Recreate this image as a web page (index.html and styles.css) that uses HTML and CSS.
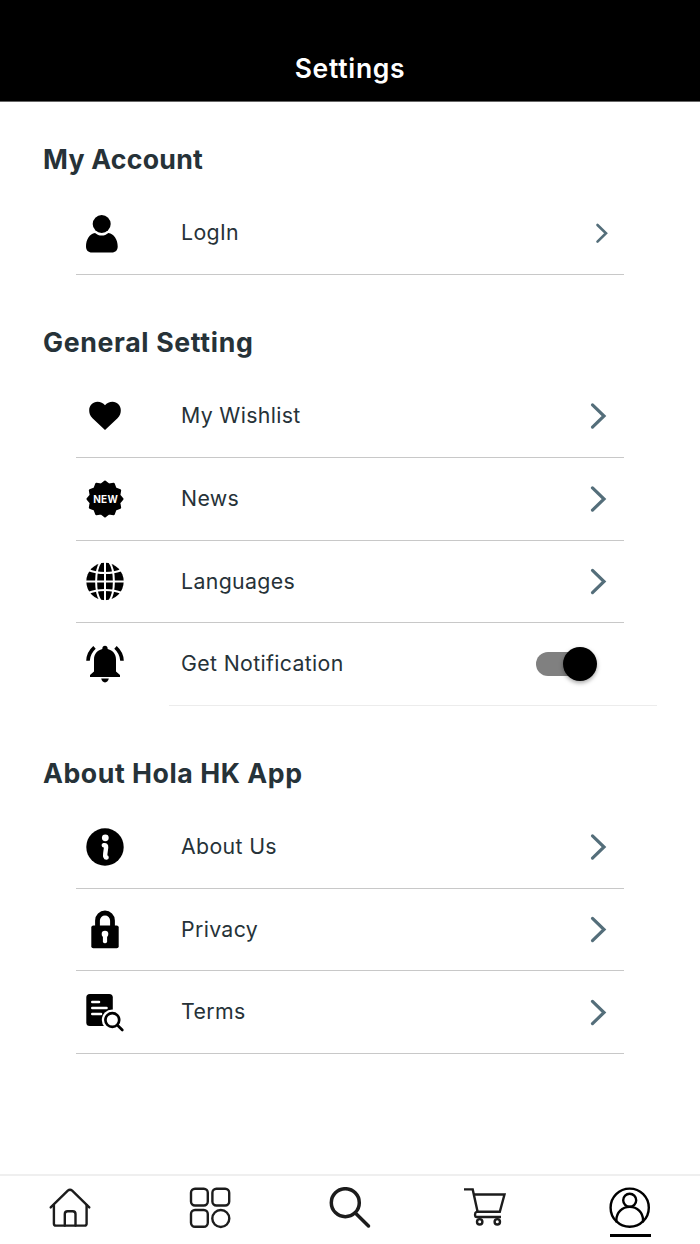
FILE: index.html
```html
<!DOCTYPE html>
<html lang="en">
<head>
    <meta charset="UTF-8">
    <meta name="viewport" content="width=device-width, initial-scale=1.0">
    <title>Settings</title>
    <link rel="stylesheet" href="styles.css">
</head>
<body>

    <header class="header">
        <h1>Settings</h1>
    </header>

    <main class="settings">
        <h2 class="first">My Account</h2>
        <div class="row">
            <svg class="icon" viewBox="0 0 40 40">
                <circle cx="16.7" cy="11" r="9"/>
                <path d="M10 19.9C12 21.500 14.200 22.500 16.700 22.500S21.400 21.500 23.400 19.900C29 20.500 32.700 26.500 32.700 33.500C32.700 37.300 30.500 39.500 26.700 39.500H7C3.200 39.500 1 37.300 1 33.500C1 26.500 4.500 20.500 10 19.900Z"/>
            </svg>
            <span class="label">LogIn</span>
            <svg class="arrow small" viewBox="0 0 20 30"><path d="M8.500 7L17 15.300L8.500 23.600"/></svg>
        </div>

        <h2>General Setting</h2>
        <div class="row">
            <svg class="icon" viewBox="0 0 40 40">
                <path d="M20 34L7.500 22.300C4.800 19.600 4.200 17 4.200 14.300C4.200 9.500 7.800 5.800 12.500 5.800C15.600 5.800 18.200 7 20 9.300C21.800 7 24.400 5.800 27.500 5.800C32.200 5.800 35.800 9.500 35.800 14.300C35.800 17 35.200 19.600 32.500 22.300Z"/>
            </svg>
            <span class="label">My Wishlist</span>
            <svg class="arrow" viewBox="0 0 20 30"><path d="M3.500 3.900L15 15L3.500 26.100"/></svg>
        </div>
        <div class="row">
            <svg class="icon" viewBox="0 0 40 40">
                <polygon class="badge" points="37.4,20 34.300,23.830 35.070,28.700 30.470,30.470 28.700,35.070 23.830,34.300 20,37.400 16.170,34.300 11.300,35.070 9.530,30.470 4.930,28.700 5.700,23.830 2.600,20 5.700,16.170 4.930,11.300 9.530,9.530 11.300,4.930 16.170,5.700 20,2.600 23.830,5.700 28.700,4.930 30.470,9.530 35.070,11.300 34.300,16.170"/>
                <text class="badge-text" x="8.200" y="23.800">NEW</text>
            </svg>
            <span class="label">News</span>
            <svg class="arrow" viewBox="0 0 20 30"><path d="M3.500 3.900L15 15L3.500 26.100"/></svg>
        </div>
        <div class="row">
            <svg class="icon" viewBox="0 0 40 40">
                <circle cx="20" cy="20.500" r="18.700"/>
                <g class="cut">
                    <path d="M20 0V40M0 20.500H40"/>
                    <path d="M16 0.500C9.500 9.500 9.500 31.500 16 40.500M24 0.500C30.500 9.500 30.500 31.500 24 40.500"/>
                    <path d="M3 9C13 13 27 13 37 9M3 32C13 28 27 28 37 32"/>
                </g>
            </svg>
            <span class="label">Languages</span>
            <svg class="arrow" viewBox="0 0 20 30"><path d="M3.500 4.400L15 15.500L3.500 26.600"/></svg>
        </div>
        <div class="row notify">
            <svg class="icon" viewBox="0 0 40 40">
                <path d="M20 1.800C21.600 1.800 22.700 3 22.700 5C28 6.500 31 10 31 15.500V27.500L35 31V32.900H5V31L9 27.500V15.500C9 10 12 6.500 17.300 5C17.300 3 18.400 1.800 20 1.800Z"/>
                <path d="M16.200 34.600H23.800C23.400 36.900 22 38.400 20 38.400S16.600 36.900 16.200 34.600Z"/>
                <path class="wave" d="M3 16.700C3.200 11.500 5.200 7.200 9.500 3.300M37 16.700C36.800 11.500 34.800 7.200 30.500 3.300"/>
            </svg>
            <span class="label">Get Notification</span>
            <div class="toggle"><div class="knob"></div></div>
        </div>

        <h2 class="about">About Hola HK App</h2>
        <div class="row">
            <svg class="icon" viewBox="0 0 40 40">
                <circle cx="20" cy="20" r="18.700"/>
                <circle class="white" cx="20.300" cy="10.800" r="3.400"/>
                <path class="stem" d="M18.800 18.200C20.600 17.800 21.300 18.500 21.100 20.500L20.300 26.500C20 29.200 20.300 30.600 21.600 30.500"/>
            </svg>
            <span class="label">About Us</span>
            <svg class="arrow" viewBox="0 0 20 30"><path d="M3.500 3.900L15 15L3.500 26.100"/></svg>
        </div>
        <div class="row">
            <svg class="icon" viewBox="0 0 40 40">
                <rect x="6.300" y="16.500" width="27.400" height="22.700" rx="2"/>
                <path class="shackle" d="M12.500 18.500V11.500A7.500 7.500 0 0 1 27.500 11.500V18.500"/>
                <circle class="white" cx="20" cy="25" r="3.300"/>
                <rect class="white" x="17.900" y="24.700" width="4.200" height="9.500" rx="1.800"/>
            </svg>
            <span class="label">Privacy</span>
            <svg class="arrow" viewBox="0 0 20 30"><path d="M3.500 4.400L15 15.500L3.500 26.600"/></svg>
        </div>
        <div class="row">
            <svg class="icon" viewBox="0 0 40 40">
                <rect x="1.300" y="2" width="26.500" height="32" rx="3.500"/>
                <path class="lines" d="M7.300 10H14M7.300 16H21.500M7.300 22H16"/>
                <circle class="white" cx="27.300" cy="28" r="10.500"/>
                <path class="lens" d="M33 33.700L37.300 38"/>
                <circle class="lens" cx="27.300" cy="28" r="6.900"/>
            </svg>
            <span class="label">Terms</span>
            <svg class="arrow" viewBox="0 0 20 30"><path d="M3.500 4.400L15 15.500L3.500 26.600"/></svg>
        </div>
    </main>

    <nav class="tabs">
        <a class="tab">
            <svg viewBox="0 0 42 42">
                <path d="M1.700 20.400L18.800 3.700Q21 1.700 23.200 3.700L40.300 20.400"/>
                <path d="M4.900 18V36.700Q4.900 38.600 6.900 38.600H35.600Q37.600 38.600 37.600 36.700V18"/>
                <path d="M15.800 38.500V27Q15.800 24.200 18.600 24.200H23.700Q26.500 24.200 26.500 27V38.500"/>
            </svg>
        </a>
        <a class="tab">
            <svg viewBox="0 0 42 42">
                <rect x="2" y="1.700" width="16.800" height="16.800" rx="4"/>
                <rect x="23.400" y="1.700" width="16.800" height="16.800" rx="4"/>
                <rect x="2" y="23" width="16.800" height="16.800" rx="4"/>
                <circle cx="31.800" cy="31.500" r="8.500"/>
            </svg>
        </a>
        <a class="tab search">
            <svg viewBox="0 0 42 42">
                <circle cx="16.300" cy="15.700" r="14"/>
                <path d="M26.600 26.300L39.500 39"/>
            </svg>
        </a>
        <a class="tab cart">
            <svg viewBox="0 0 52 42">
                <path d="M0 2.400H8.700L13.600 24.800"/>
                <path d="M10 7.500H40.500L35.800 24.800H12.500C10.500 25.500 10.500 30 12.800 30H37"/>
                <circle cx="15.700" cy="34.800" r="2.700"/>
                <circle cx="33.300" cy="34.800" r="2.700"/>
            </svg>
        </a>
        <a class="tab active">
            <svg viewBox="0 0 42 42">
                <circle cx="20.700" cy="20.700" r="19.100"/>
                <circle cx="20.700" cy="13.200" r="6.500"/>
                <path d="M7.400 34.400V33C7.400 25.500 13.200 19.900 20.700 19.900S34 25.500 34 33V34.400"/>
            </svg>
        </a>
    </nav>

</body>
</html>
```
FILE: styles.css
```css
body {
    margin: 0;
    height: 1244px;
    display: flex;
    flex-direction: column;
    background: #fff;
    color: #263238;
    font-family: Inter, "Liberation Sans", sans-serif;
    overflow: hidden;
}

.header {
    box-sizing: border-box;
    height: 102px;
    padding-top: 50px;
    background: #000;
    border-bottom: 1px solid #666;
}

.header h1 {
    margin: 0;
    color: #fff;
    font-size: 26.5px;
    font-weight: 600;
    line-height: 36px;
    letter-spacing: 0.7px;
    text-align: center;
}

.settings {
    flex: 1;
}

.settings h2 {
    box-sizing: border-box;
    height: 100.3px;
    margin: 0;
    padding: 49px 0 0 43px;
    font-size: 26.7px;
    font-weight: 700;
    line-height: 36px;
    letter-spacing: 0.65px;
}

.settings h2.first {
    height: 90px;
    padding-top: 39px;
    letter-spacing: 0.25px;
}

.settings h2.about {
    height: 99.8px;
    letter-spacing: 0.55px;
}

.row {
    box-sizing: border-box;
    height: 82.75px;
    margin: 0 76px;
    padding: 0 16px 0 9px;
    display: flex;
    align-items: center;
    border-bottom: 1px solid #c8c8c8;
}

.row.notify {
    margin: 0 43px 0 169px;
    padding: 0 60px 0 0;
    border-bottom-color: #ececec;
}

.row.notify .icon {
    margin-left: -84px;
}

.icon {
    width: 40px;
    height: 40px;
    flex: none;
    fill: #000;
}

.label {
    flex: 1;
    margin-left: 56px;
    padding-bottom: 1.6px;
    font-size: 21.3px;
    line-height: 30px;
    letter-spacing: 0.35px;
}

.arrow {
    width: 20px;
    height: 30px;
    margin-right: -0.8px;
    fill: none;
    stroke: #546e7a;
    stroke-width: 3.2;
    stroke-linecap: round;
}

.arrow.small {
    stroke-width: 2.6;
}

.white {
    fill: #fff;
}

.badge {
    stroke: #000;
    stroke-width: 2.2;
    stroke-linejoin: round;
}

.badge-text {
    fill: #fff;
    font-size: 10px;
    font-weight: 700;
    letter-spacing: 0.3px;
}

.cut {
    fill: none;
    stroke: #fff;
    stroke-width: 2;
}

.wave {
    fill: none;
    stroke: #000;
    stroke-width: 3.6;
}

.stem {
    fill: none;
    stroke: #fff;
    stroke-width: 4.4;
    stroke-linecap: round;
}

.shackle {
    fill: none;
    stroke: #000;
    stroke-width: 4.8;
}

.lines {
    stroke: #fff;
    stroke-width: 2.6;
    stroke-linecap: round;
}

.lens {
    fill: none;
    stroke: #000;
    stroke-width: 2.7;
    stroke-linecap: round;
}

.toggle {
    width: 58px;
    height: 24px;
    display: flex;
    align-items: center;
    justify-content: flex-end;
    margin-right: 3px;
    background: #808080;
    border-radius: 12px;
}

.knob {
    width: 34px;
    height: 34px;
    flex: none;
    margin-right: -3px;
    background: #000;
    border-radius: 50%;
    box-shadow: 0 2px 4px rgba(0, 0, 0, 0.35);
}

.tabs {
    box-sizing: border-box;
    height: 70px;
    display: flex;
    border-top: 2px solid #efefef;
}

.tab {
    flex: 1;
    display: flex;
    flex-direction: column;
    align-items: center;
    padding-top: 11px;
}

.tab svg {
    width: 42px;
    height: 42px;
    fill: none;
    stroke: #1c1c1c;
    stroke-width: 2.4;
    stroke-linecap: round;
}

.tab.search svg {
    stroke-width: 3.5;
}

.tab.cart svg {
    width: 52px;
    stroke-linecap: butt;
}

.tab.active svg {
    stroke: #000;
}

.tab.active::after {
    content: "";
    width: 41px;
    height: 3px;
    margin-top: 5px;
    background: #000;
}
```
